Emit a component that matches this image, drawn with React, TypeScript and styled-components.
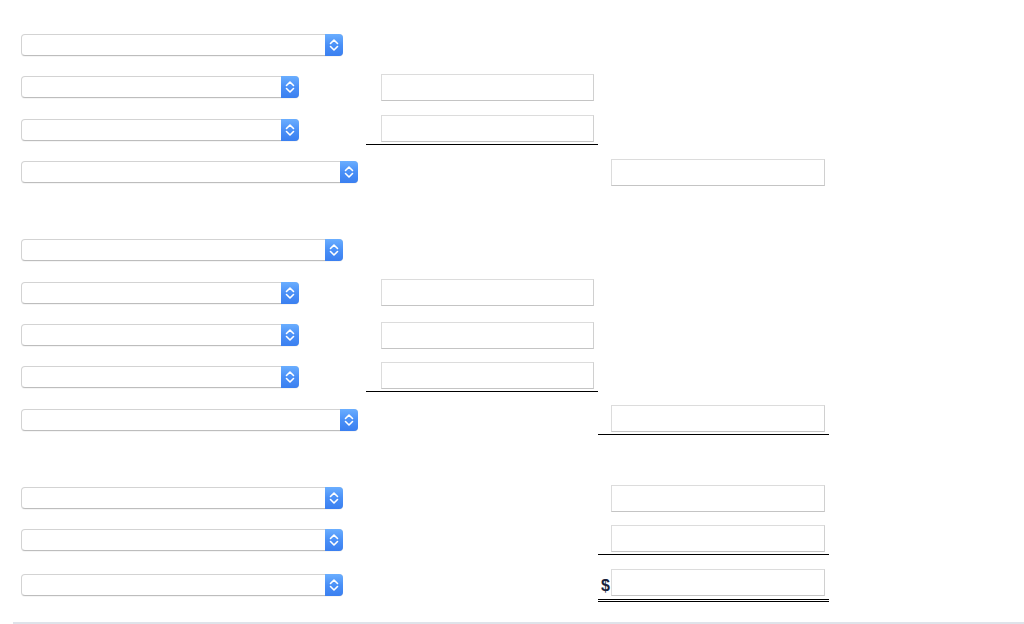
import styled, { createGlobalStyle } from "styled-components"

const GlobalStyle = createGlobalStyle`
    html, body {
        margin: 0;
        padding: 0;
        background: #ffffff;
        font-family: "Liberation Sans", Arial, sans-serif;
    }
`

const Page = styled.div`
    width: 1024px;
    height: 624px;
    box-sizing: border-box;
    padding: 24px 0 0 13px;
    display: flex;
    flex-direction: column;
    overflow: hidden;
`

const Section = styled.div`
    display: flex;
    flex-direction: column;
    & + & {
        margin-top: 36px;
    }
`

const Row = styled.div<{ $h: number }>`
    display: grid;
    grid-template-columns: 353px 232px 231px;
    height: ${p => p.$h}px;
    align-items: center;
`

const SelectCell = styled.div`
    padding-left: 8px;
    display: flex;
    align-items: center;
`

const SelectBox = styled.div<{ $w: number }>`
    width: ${p => p.$w}px;
    height: 22px;
    box-sizing: border-box;
    display: flex;
    border: 1px solid #d3d3d3;
    border-bottom-color: #bdbdbd;
    border-radius: 4px;
    background: #ffffff;
    box-shadow: 0 1px 0 rgba(0, 0, 0, 0.04);
`

const SelectField = styled.div`
    flex: 1;
`

const SelectButton = styled.div`
    width: 18px;
    margin: -1px -1px -1px 0;
    border-radius: 0 4px 4px 0;
    background: linear-gradient(to bottom, #6aaeff 0%, #4a90f7 50%, #3a7ff0 100%);
    display: flex;
    align-items: center;
    justify-content: center;
`

const InputCell = styled.div<{ $lead: number; $line?: "single" | "double" }>`
    display: flex;
    align-items: flex-end;
    padding: 0 4px ${p => (p.$line === "double" ? 3 : p.$line ? 2 : 0)}px ${p => p.$lead}px;
    border-bottom: ${p => (p.$line === "double" ? "3px double #000" : p.$line ? "1px solid #000" : "none")};
`

const Dollar = styled.span`
    width: 13px;
    margin-left: -13px;
    font-size: 16px;
    font-weight: bold;
    line-height: 16px;
    color: #17223a;
    padding-left: 3px;
    padding-bottom: 2px;
    box-sizing: border-box;
    font-family: "Liberation Sans", Arial, sans-serif;
`

const TextBox = styled.div`
    flex: 1;
    height: 27px;
    box-sizing: border-box;
    border: 1px solid #dcdcdc;
    border-bottom-color: #c4c4c4;
    border-right-color: #d0d0d0;
    background: #ffffff;
`

const Footer = styled.div`
    margin-top: auto;
    margin-bottom: 0;
    height: 2px;
    background: #dfe3ea;
`

const Chevrons = () => (
    <svg width="12" height="16" viewBox="0 0 12 16" fill="none">
        <path d="M2.5 6.5 L6 3 L9.5 6.5" stroke="#fff" strokeWidth="1.6" strokeLinecap="round" strokeLinejoin="round" />
        <path d="M2.5 9.5 L6 13 L9.5 9.5" stroke="#fff" strokeWidth="1.6" strokeLinecap="round" strokeLinejoin="round" />
    </svg>
)

const Select = ({ width }: { width: number }) => (
    <SelectCell>
        <SelectBox $w={width}>
            <SelectField />
            <SelectButton><Chevrons /></SelectButton>
        </SelectBox>
    </SelectCell>
)

type Line = "single" | "double" | undefined

interface RowSpec {
    h: number
    sel: number
    col?: 2 | 3
    line?: Line
    dollar?: boolean
}

const sections: RowSpec[][] = [
    [
        { h: 42, sel: 322 },
        { h: 42, sel: 278, col: 2 },
        { h: 43, sel: 278, col: 2, line: "single" },
        { h: 42, sel: 337, col: 3 },
    ],
    [
        { h: 42, sel: 322 },
        { h: 43, sel: 278, col: 2 },
        { h: 42, sel: 278, col: 2 },
        { h: 42, sel: 278, col: 2, line: "single" },
        { h: 43, sel: 337, col: 3, line: "single" },
    ],
    [
        { h: 42, sel: 322, col: 3 },
        { h: 42, sel: 322, col: 3, line: "single" },
        { h: 48, sel: 322, col: 3, line: "double", dollar: true },
    ],
]

const Entry = ({ spec }: { spec: RowSpec }) => (
    <InputCell $lead={spec.col === 2 ? 15 : 13} $line={spec.line}>
        {spec.dollar ? <Dollar>$</Dollar> : null}
        <TextBox />
    </InputCell>
)

const App = () => {
    return (
        <>
            <GlobalStyle />
            <Page>
                {sections.map((rows, i) => (
                    <Section key={i}>
                        {rows.map((r, j) => (
                            <Row key={j} $h={r.h}>
                                <Select width={r.sel} />
                                {r.col === 2 ? <Entry spec={r} /> : <div />}
                                {r.col === 3 ? <Entry spec={r} /> : <div />}
                            </Row>
                        ))}
                    </Section>
                ))}
                <Footer />
            </Page>
        </>
    )
}

export default App
